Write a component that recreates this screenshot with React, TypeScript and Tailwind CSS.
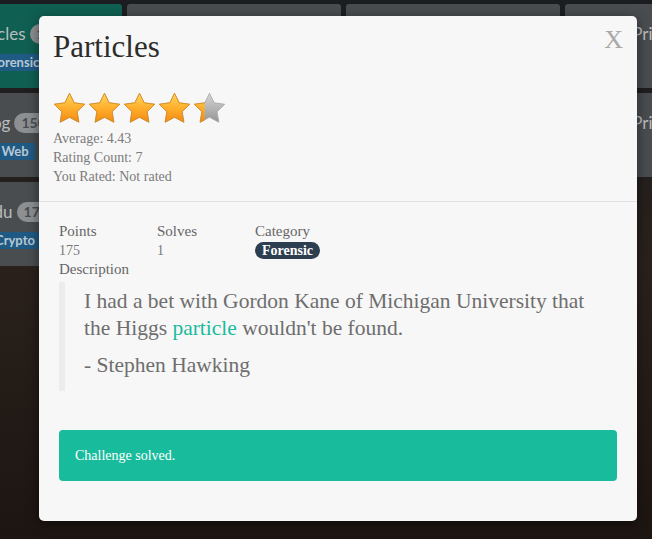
import React from "react";

const STAR = "M12 1.6l3.2 6.5 7.2 1-5.2 5.1 1.2 7.2L12 18l-6.4 3.4 1.2-7.2L1.6 9.1l7.2-1z";

function Star({ fill, id }: { fill: number; id: string }) {
  return (
    <svg width="35" height="35" viewBox="0 0 24 24">
      <defs>
        <linearGradient id={`o-${id}`} x1="0" y1="0" x2="0" y2="1">
          <stop offset="0" stopColor="#ffd65a" />
          <stop offset="0.55" stopColor="#ffac2a" />
          <stop offset="1" stopColor="#f28a12" />
        </linearGradient>
        <linearGradient id={`g-${id}`} x1="0" y1="0" x2="0" y2="1">
          <stop offset="0" stopColor="#d6d6d6" />
          <stop offset="1" stopColor="#959595" />
        </linearGradient>
        <clipPath id={`c-${id}`}>
          <rect x="0" y="0" width={24 * fill} height="24" />
        </clipPath>
      </defs>
      <path d={STAR} fill={`url(#g-${id})`} stroke="#a9a9a9" strokeWidth="0.6" strokeLinejoin="round" />
      <path
        d={STAR}
        fill={`url(#o-${id})`}
        stroke="#d98a1c"
        strokeWidth="0.6"
        strokeLinejoin="round"
        clipPath={`url(#c-${id})`}
      />
    </svg>
  );
}

function Tile({
  title,
  points,
  label,
  solved,
}: {
  title: string;
  points: string;
  label: string;
  solved?: boolean;
}) {
  return (
    <div
      className={`w-[214px] h-[84px] shrink-0 rounded-[3px] flex flex-col items-center justify-center gap-[8px] ${
        solved ? "bg-[#0f5f52]" : "bg-[#4a4d50]"
      }`}
    >
      <div className="flex items-center gap-[4px] text-[17px] text-[#b9bcbe]">
        <span>{title}</span>
        <span className="rounded-full bg-[#8d9092] text-[#4a4d50] text-[14px] font-bold px-[7px] leading-[20px]">
          {points}
        </span>
      </div>
      <span className="bg-[#1f5a84] text-[#b8c7d3] text-[13px] font-bold px-[6px] leading-[17px] rounded-[2px]">
        {label}
      </span>
    </div>
  );
}

export default function App() {
  return (
    <div className="relative w-[652px] h-[539px] overflow-hidden bg-[#231b17] font-['Lato',sans-serif]">
      {/* background board */}
      <div className="absolute inset-0 bg-gradient-to-b from-[#1b1d20] via-[#2a211c] to-[#1d1511]" />
      <div className="relative flex flex-col gap-[5px] pt-[4px] ml-[-92px]">
        <div className="flex gap-[5px]">
          <Tile title="Particles" points="175" label="Forensic" solved />
          <Tile title="Mice" points="100" label="Misc" />
          <Tile title="Dice" points="150" label="Crypto" />
          <Tile title="Price" points="200" label="Web" />
        </div>
        <div className="flex gap-[5px]">
          <Tile title="Blog" points="150" label="Web" />
          <Tile title="Notes" points="200" label="Web" />
          <Tile title="Storage" points="250" label="Pwn" />
          <Tile title="Price" points="100" label="Web" />
        </div>
        <div className="flex gap-[5px]">
          <Tile title="Sudu" points="175" label="Crypto" />
          <Tile title="Keys" points="200" label="Crypto" />
          <Tile title="Lock" points="300" label="Reverse" />
        </div>
      </div>

      {/* modal */}
      <div className="absolute left-[39px] top-[16px] w-[598px] h-[505px] bg-[#f7f7f7] rounded-[5px] shadow-[0_3px_12px_rgba(0,0,0,0.5)] font-['Liberation_Serif',serif]">
        <div className="relative px-[14px] pt-[12px] pb-[15px] border-b border-[#e2e2e2]">
          <h1 className="text-[31px] leading-[38px] text-[#2c2c2c]">Particles</h1>
          <span className="absolute right-[14px] top-[4px] text-[26px] text-[#a9a9a9]">X</span>
          <div className="flex mt-[25px] -ml-[1px]">
            {[1, 1, 1, 1, 0.36].map((f, i) => (
              <Star key={i} fill={f} id={`s${i}`} />
            ))}
          </div>
          <div className="mt-[3px] text-[14px] leading-[19px] text-[#7b7b7b]">
            <div>Average: 4.43</div>
            <div>Rating Count: 7</div>
            <div>You Rated: Not rated</div>
          </div>
        </div>

        <div className="px-[20px] pt-[20px]">
          <div className="flex text-[15px] leading-[19px] text-[#666]">
            <div className="w-[98px]">
              <div>Points</div>
              <div className="text-[14px] text-[#777]">175</div>
            </div>
            <div className="w-[98px]">
              <div>Solves</div>
              <div className="text-[14px] text-[#777]">1</div>
            </div>
            <div>
              <div>Category</div>
              <span className="inline-block bg-[#2c3e50] text-white font-bold text-[14px] leading-[17px] px-[7px] rounded-full">
                Forensic
              </span>
            </div>
          </div>
          <div className="text-[15px] leading-[19px] text-[#666]">Description</div>

          <blockquote className="mt-[3px] border-l-[6px] border-[#ececec] pl-[19px] pr-[24px] pt-[6px] pb-[12px] text-[21.5px] leading-[27px] text-[#6e6e6e]">
            <p>
              I had a bet with Gordon Kane of Michigan University that the Higgs{" "}
              <span className="text-[#18bc9c]">particle</span> wouldn't be found.
            </p>
            <p className="mt-[10px]">- Stephen Hawking</p>
          </blockquote>

          <div className="mt-[39px] h-[51px] rounded-[4px] bg-[#18bc9c] flex items-center px-[16px] text-[14px] text-white">
            Challenge solved.
          </div>
        </div>
      </div>
    </div>
  );
}
